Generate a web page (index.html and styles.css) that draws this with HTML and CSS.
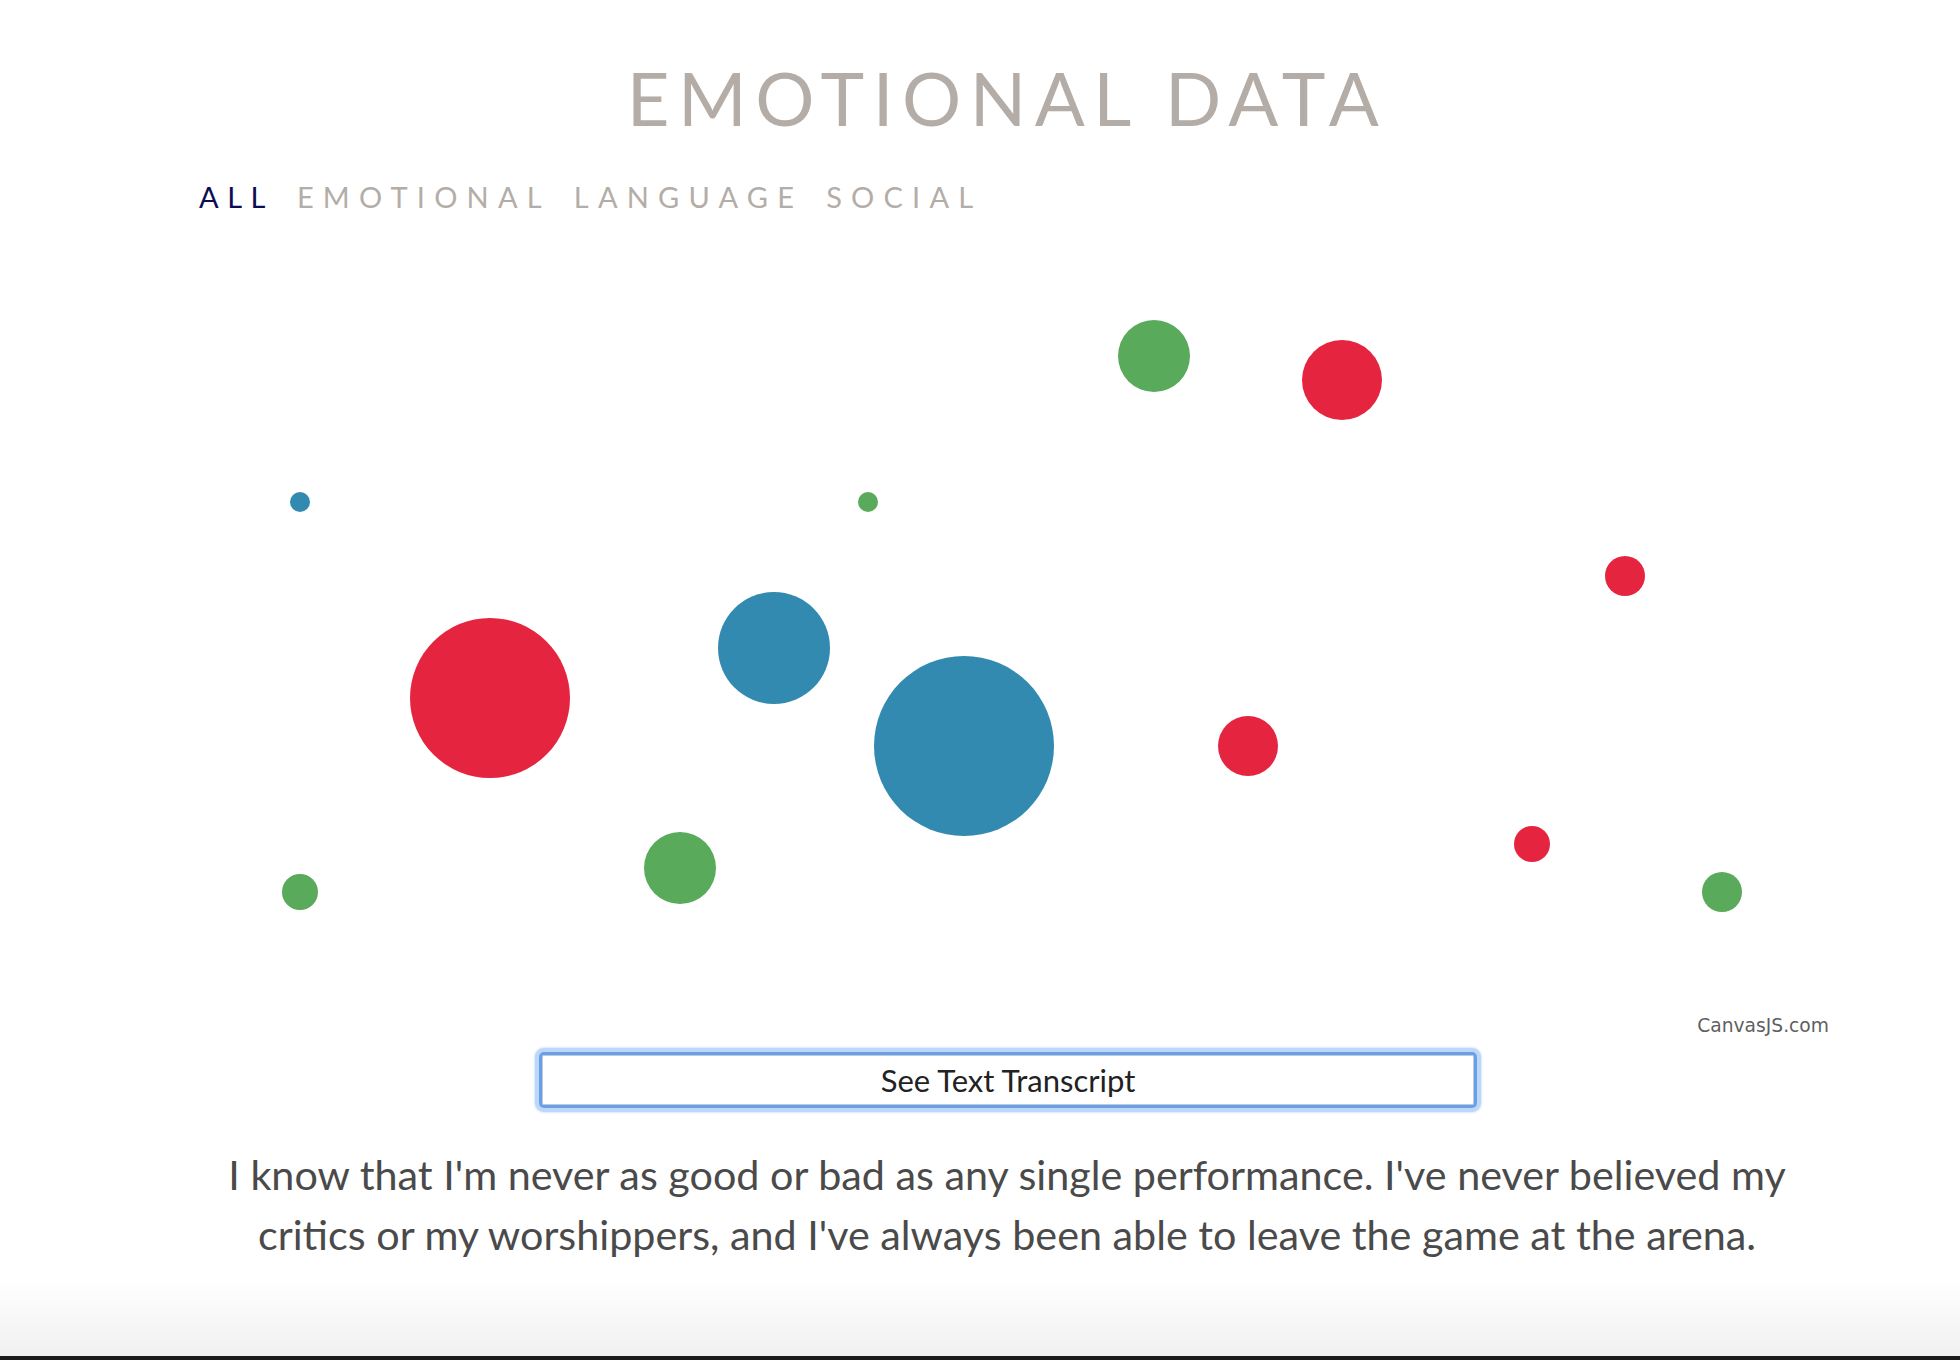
FILE: index.html
```html
<!DOCTYPE html>
<html lang="en">
<head>
<meta charset="utf-8">
<title>Emotional Data</title>
<link rel="stylesheet" href="styles.css">
</head>
<body>
<div class="page">
  <main class="content">
    <h1 class="title">EMOTIONAL DATA</h1>
    <nav class="filters">
      <a class="filter active">ALL</a>
      <a class="filter">EMOTIONAL</a>
      <a class="filter">LANGUAGE</a>
      <a class="filter">SOCIAL</a>
    </nav>
    <div class="chart">
      <svg class="chart-canvas" viewBox="0 0 1906 822" width="1906" height="822">
        <g transform="translate(-54,-214)">
          <circle class="green" cx="1154" cy="356" r="36"/>
          <circle class="red" cx="1342" cy="380" r="40"/>
          <circle class="blue" cx="300" cy="502" r="10"/>
          <circle class="green" cx="868" cy="502" r="10"/>
          <circle class="red" cx="1625" cy="576" r="20"/>
          <circle class="red" cx="490" cy="698" r="80"/>
          <circle class="blue" cx="774" cy="648" r="56"/>
          <circle class="blue" cx="964" cy="746" r="90"/>
          <circle class="red" cx="1248" cy="746" r="30"/>
          <circle class="red" cx="1532" cy="844" r="18"/>
          <circle class="green" cx="300" cy="892" r="18"/>
          <circle class="green" cx="680" cy="868" r="36"/>
          <circle class="green" cx="1722" cy="892" r="20"/>
        </g>
      </svg>
      <span class="credit">CanvasJS.com</span>
    </div>
    <button class="transcript-btn" type="button">See Text Transcript</button>
    <p class="quote">I know that I'm never as good or bad as any single performance. I've never believed my critics or my worshippers, and I've always been able to leave the game at the arena.</p>
  </main>
  <div class="fade"></div>
  <div class="dark-strip"></div>
</div>
</body>
</html>
```

FILE: styles.css
```css
html, body {
  margin: 0;
  padding: 0;
  background: #ffffff;
}

body {
  font-family: Lato, "Open Sans", sans-serif;
  overflow: hidden;
}

.page {
  min-height: 1360px;
  display: flex;
  flex-direction: column;
}

.content {
  padding-left: 54px;
  display: flex;
  flex-direction: column;
  flex: 1;
}

.title {
  margin: 53px 0 0;
  font-size: 74px;
  font-weight: 400;
  line-height: normal;
  letter-spacing: 8.5px;
  color: #b4ada7;
  text-align: center;
}

.filters {
  margin: 37px 0 0 145px;
  display: flex;
  gap: 23px;
  font-size: 29px;
  line-height: normal;
}

.filter {
  letter-spacing: 9.2px;
  color: #b4ada7;
  cursor: pointer;
}

.filter.active {
  letter-spacing: 8.5px;
  color: #0c0c52;
}

.chart {
  position: relative;
  height: 822px;
}

.chart-canvas {
  display: block;
}

.red { fill: #e52440; }
.blue { fill: #338ab1; }
.green { fill: #5aaa5b; }

.credit {
  position: absolute;
  top: 801px;
  right: 131px;
  font-family: "DejaVu Sans", Verdana, sans-serif;
  font-size: 18.7px;
  line-height: normal;
  color: #5f5f5f;
}

.transcript-btn {
  align-self: center;
  margin: 16px 0 0 2px;
  width: 938px;
  height: 56px;
  border: 3px solid #6a9fe5;
  border-radius: 5px;
  box-shadow: inset 0 0 0 1px rgba(70, 100, 150, 0.35), 0 0 0 4px #bcd7f8, 0 0 2px 5px rgba(188, 215, 248, 0.6);
  background: #ffffff;
  font-family: Lato, sans-serif;
  font-size: 31px;
  color: #222222;
  padding: 0;
}

.quote {
  margin: 36px auto 0;
  max-width: 1600px;
  font-size: 41.3px;
  line-height: 60px;
  color: #4a4a4a;
  text-align: center;
}

.fade {
  margin-top: auto;
  height: 76px;
  background: linear-gradient(#ffffff, #f0f0f0);
}

.dark-strip {
  height: 4px;
  background: #1c1a1a;
}
```
